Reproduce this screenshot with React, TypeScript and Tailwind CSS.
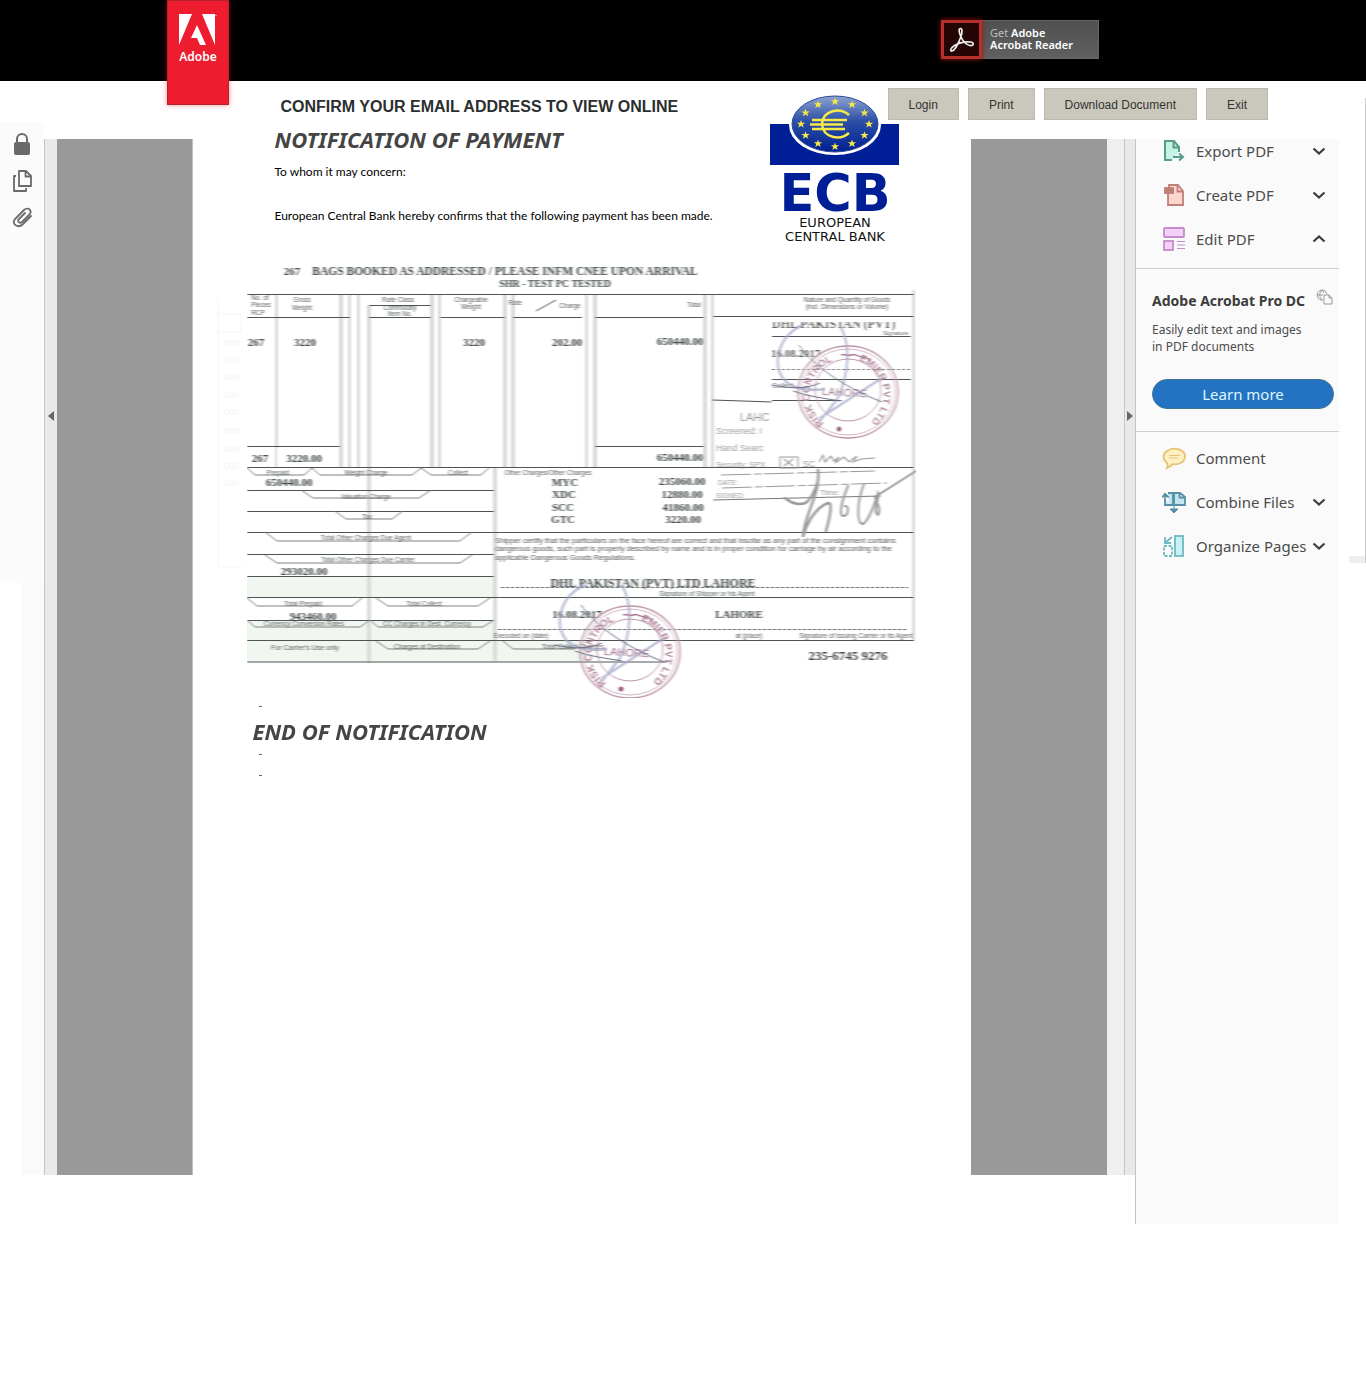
import React from "react";

const PDF_FONT = "font-['Noto_Sans','Liberation_Sans',sans-serif]";
const BODY_FONT = "font-['Lato','Noto_Sans',sans-serif]";

function AdobeTag() {
  return (
    <div className={`relative z-10 flex h-[105px] w-[62px] flex-col items-center border border-[#b5222c] bg-[#ed1c2e] pt-[13px] shadow-[0_0_5px_rgba(237,28,46,0.5)] ${PDF_FONT}`}>
      <svg viewBox="0 0 38 31" className="h-[31px] w-[38px]" fill="#fff" aria-hidden="true">
        <path d="M0 0h13L0 31zM23 0h13v31zM18 11l9 20h-6l-3-7h-6z" />
        <circle cx="37" cy="1.500" r="0.800" opacity="0.6" />
      </svg>
      <span className="mt-[2px] text-[12px] font-semibold leading-5 text-white">Adobe</span>
    </div>
  );
}

function ReaderBadge() {
  return (
    <div className={`flex h-[39px] w-[158px] border border-[#666] bg-linear-to-b from-[#505050] to-[#606060] ${PDF_FONT}`}>
      <div className="-my-px -ml-px flex w-[41px] items-center justify-center border-[3px] border-[#b3312a] bg-[#240404] shadow-[0_0_5px_#a01010]">
        <svg viewBox="0 0 26 26" className="size-[26px]" fill="none" stroke="#eee" strokeWidth="1.7" aria-hidden="true">
          <path d="M11.5 1.5c-2 0-1.700 4 .5 8.500 2 4 5.500 8 9 8.500 4 .6 4.500-3 .5-3.500-5-.6-12 1-16 3.500-4.500 3-4.500 6-2.500 5.500C6 23.500 10 15 11.800 10c1.600-4.500 1.700-8.500-.3-8.500z" />
        </svg>
      </div>
      <div className="pl-2 pt-[6px] text-[11px] font-semibold leading-3 text-white">
        <p><span className="font-normal text-[#bbb]">Get</span> Adobe</p>
        <p>Acrobat Reader</p>
      </div>
    </div>
  );
}

const stars = Array.from({ length: 12 }, (_, i) => {
  const a = (i * Math.PI) / 6;
  return [65 + Math.sin(a) * 34, 29 - Math.cos(a) * 22.5];
});

function EcbLogo() {
  return (
    <svg viewBox="0 0 134 150" className="h-[150px] w-[134px]" role="img" aria-label="European Central Bank">
      <defs>
        <linearGradient id="globe" x1="0" y1="0" x2="0" y2="1">
          <stop offset="0" stopColor="#8ea3d2" />
          <stop offset="0.45" stopColor="#2c4fa6" />
          <stop offset="1" stopColor="#001f92" />
        </linearGradient>
      </defs>
      <rect x="0" y="29" width="129" height="41" fill="#001f96" />
      <ellipse cx="65" cy="30" rx="46" ry="30" fill="#fff" />
      <ellipse cx="65" cy="29" rx="43" ry="28" fill="url(#globe)" stroke="#29489b" />
      {stars.map(([x, y], i) => (
        <path key={i} transform={`translate(${x} ${y})`} fill="#f7e948" d="M0-4l1 2.700h3.200l-2.500 1.800 1 3L0 1.800-2.700 3.500l1-3L-4.200-1.300H-1z" />
      ))}
      <path d="M79 20c-9-8-26-5-27 9 1 14 18 17 27 9M42 25h35M40 29.500h33M42 34h33" fill="none" stroke="#f7e948" strokeWidth="2.500" />
      <text x="65" y="116" textAnchor="middle" fontFamily="DejaVu Sans, sans-serif" fontSize="51" fontWeight="700" fill="#001f96">ECB</text>
      <g fill="#111" fontFamily="DejaVu Sans, sans-serif" fontSize="13" textAnchor="middle">
        <text x="65" y="132">EUROPEAN</text>
        <text x="65" y="146">CENTRAL BANK</text>
      </g>
    </svg>
  );
}

function StampScene() {
  return (
    <g fill="none">
      <g stroke="#bd94a8">
        <ellipse cx="848" cy="392" rx="50" ry="46" strokeWidth="1.500" />
        <ellipse cx="848" cy="392" rx="47" ry="43" strokeWidth="0.700" />
        <ellipse cx="848" cy="390" rx="33" ry="31" />
      </g>
      <path id="ring" d="M824 423A37 36 0 1 1 866 425" />
      <g fill="#b2849b" fontFamily="Liberation Sans, sans-serif" fontSize="10" fontWeight="700">
        <text><textPath href="#ring" startOffset="0">RISK CONTROL</textPath></text>
        <text><textPath href="#ring" startOffset="103">EMIER PVT LTD</textPath></text>
        <text x="822" y="396" transform="rotate(3 840 392)" fontSize="11" fontWeight="400" fill="#9a6686">LAHORE</text>
      </g>
      <path d="M841 355c4-2 6 2 10 0s7 2 12 2 4 2 8 4" stroke="#a97791" strokeWidth="1.500" />
      <circle cx="839" cy="429" r="2.500" fill="#a06080" />
      <g stroke="#a3a5c6" strokeWidth="2.500" opacity="0.7">
        <path d="M803 325C778 336 771 364 785 381c10 9 25 10 40 8M840 325c12 22 8 50-2 73l-18 23M820 418l62-40" />
      </g>
      <path d="M772 385c20 4 35 4 48-2M799 345c12 18 40 40 83 57M793 391c18 6 30 7 47 10" stroke="#666c85" />
    </g>
  );
}

const bars: number[][] = [
  [275, 295, 448, 3], [339, 295, 467, 4], [348, 295, 467, 3], [357, 295, 467, 3], [367, 305, 663, 4],
  [430, 295, 467, 4], [438, 295, 467, 3], [503, 295, 467, 4], [511, 295, 467, 4], [585, 295, 467, 3],
  [593, 295, 467, 4], [703, 295, 467, 4], [711, 295, 467, 3], [493, 467, 661, 4], [912, 290, 640, 3], [275, 448, 467, 2],
];

const smallLabels: [number, number, string][] = [
  [260, 300, "No. of"], [261, 307, "Pieces"], [258, 315, "RCP"], [302, 302, "Gross"], [302, 310, "Weight"],
  [398, 302, "Rate Class"], [400, 310, "Commodity"], [400, 316, "Item No."], [471, 302, "Chargeable"], [471, 309, "Weight"],
  [515, 305, "Rate"], [570, 308, "Charge"], [694, 307, "Total"], [847, 302, "Nature and Quantity of Goods"],
  [847, 309, "(incl. Dimensions or Volume)"], [278, 475, "Prepaid"], [366, 475, "Weight Charge"], [458, 475, "Collect"],
  [548, 475, "Other Charges/Other Charges"], [366, 499, "Valuation Charge"], [367, 519, "Tax"],
  [366, 540, "Total Other Charges Due Agent"], [368, 562, "Total Other Charges Due Carrier"], [303, 606, "Total Prepaid"],
  [424, 606, "Total Collect"], [304, 626, "Currency Conversion Rates"], [427, 626, "CC Charges in Dest. Currency"],
  [427, 649, "Charges at Destination"], [573, 649, "Total Collect Charges"], [521, 638, "Executed on (date)"],
  [749, 638, "at (place)"], [856, 638, "Signature of Issuing Carrier or its Agent"], [707, 596, "Signature of Shipper or his Agent"],
];

const boldValues: [number, number, string][] = [
  [256, 346, "267"], [305, 346, "3220"], [474, 346, "3220"], [567, 346, "202.00"], [680, 345, "650440.00"],
  [260, 462, "267"], [304, 462, "3220.00"], [680, 461, "650440.00"], [289, 486, "650440.00"], [304, 575, "293020.00"],
  [313, 620, "943460.00"], [565, 486, "MYC"], [564, 498, "XDC"], [563, 511, "SCC"], [563, 523, "GTC"],
  [682, 485, "235060.00"], [682, 498, "12880.00"], [683, 511, "41860.00"], [683, 523, "3220.00"],
  [577, 618, "16.08.2017"], [739, 618, "LAHORE"],
];

function Waybill() {
  return (
    <svg viewBox="217 260 720 445" className="ml-6 h-[445px] w-[720px]" role="img" aria-label="Scanned air waybill">
      <defs>
        <filter id="scan" x="0" y="0" width="1" height="1"><feGaussianBlur stdDeviation="0.9 0.4" /></filter>
        <clipPath id="stampClip"><rect x="772" y="322" width="139" height="117" /></clipPath>
        <clipPath id="stampClip2"><rect x="772" y="322" width="150" height="116" /></clipPath>
      </defs>
      <g fill="#f2f6f0">
        <rect x="247" y="577" width="248" height="21" />
        <rect x="247" y="621" width="248" height="41" />
        <rect x="495" y="641" width="90" height="21" />
      </g>
      <path d="M218 300v267h24M218 314h23v18h-23" fill="none" stroke="#f5f5f5" />
      <g fill="#f4f4f4" fontFamily="Liberation Sans, sans-serif" fontSize="9">
        {[346, 363, 380, 398, 415, 434, 452, 469, 486].map((y) => <text key={y} x="224" y={y}>000</text>)}
      </g>
      <g filter="url(#scan)">
        {bars.map(([x, y1, y2, w], i) => <rect key={i} x={x} y={y1} width={w} height={y2 - y1} fill="#dadbd8" />)}
        <g fill="none" stroke="#4c5453">
          <path d="M247 294.500H914M247 317.500H350M369 305.500H431M369 317.500H431M440 317.500H505M513 317.500H582M595 317.500H704M713 316.500H914" />
          <path d="M247 446.500H340M595 446.500H704M247 467.500H914M247 490.500H494M247 511.500H494M247 532.500H914M247 554.500H494M247 576.500H494M247 597.500H914M247 620.500H494M247 640.500H914M247 662H667" />
          <path d="M501 587.500H908M498 629.500H908" strokeDasharray="3 2" />
          <path d="M536 311l20-11M712 400l60 2" />
        </g>
        <path fill="none" stroke="#7c8280" d="M247 468l8 7h49l8-7 8 7h92l9-7 10 7h50l8-7M301 490l12 8h106l12-8M335 511l11 8h46l11-8M265 532l12 9h183l12-9M265 555l12 8h183l12-8M247 598l10 8h95l10-8M376 598l12 8h90l12-8M247 620l8 7h105l10-7 8 7h105l11-7M376 641l12 8h90l12-8M503 641l10 8h62" />
        <g fill="#555b5a" fontFamily="Liberation Sans, sans-serif" fontSize="6.500" textAnchor="middle">
          {smallLabels.map(([x, y, label]) => <text key={label + y} x={x} y={y}>{label}</text>)}
          <text x="305" y="650" fontSize="7">For Carrier's Use only</text>
        </g>
        <g fill="#3f4647" fontFamily="Liberation Serif, serif" fontSize="11" fontWeight="700" textAnchor="middle">
          {boldValues.map(([x, y, value]) => <text key={`${x}-${y}`} x={x} y={y}>{value}</text>)}
          <text x="292" y="275">267</text>
          <text x="505" y="275" fontSize="11.500">BAGS BOOKED AS ADDRESSED / PLEASE INFM CNEE UPON ARRIVAL</text>
          <text x="555" y="287" fontSize="10">SHR - TEST PC TESTED</text>
          <text x="653" y="587" fontSize="12">DHL PAKISTAN (PVT) LTD LAHORE</text>
          <text x="848" y="660" fontSize="13">235-6745 9276</text>
        </g>
        <g fill="#4f5657" fontFamily="Liberation Sans, sans-serif" fontSize="7.500">
          <text x="495" y="543">Shipper certify that the particulars on the face hereof are correct and that insofar as any part of the consignment contains</text>
          <text x="495" y="551">dangerous goods, such part is properly described by name and is in proper condition for carriage by air according to the</text>
          <text x="495" y="560">applicable Dangerous Goods Regulations.</text>
        </g>
        <g fill="#999" fontFamily="Liberation Sans, sans-serif" fontSize="9">
          <text x="740" y="421" fontSize="11">LAHC</text>
          <text x="716" y="434">Screened: I</text>
          <text x="716" y="451">Hand Searc</text>
          <text x="716" y="467" fontSize="8">Security: SPX</text>
          <text x="803" y="467">SC</text>
          <text x="718" y="485" fontSize="7">DATE:</text>
          <text x="716" y="498" fontSize="7">SIGNED:</text>
          <text x="820" y="495" fontSize="8">Time:</text>
        </g>
        <rect x="772" y="322" width="139" height="117" fill="#fff" />
        <g clipPath="url(#stampClip)">
          <text x="772" y="328" fontFamily="Liberation Serif, serif" fontSize="12" fontWeight="700" fill="#444">DHL PAKISTAN (PVT)</text>
          <text x="771" y="357" fontFamily="Liberation Serif, serif" fontSize="11" fontWeight="700" fill="#444">16.08.2017</text>
          <text x="772" y="388" fontFamily="Liberation Sans, sans-serif" fontSize="7" fill="#666">Collect</text>
          <text x="883" y="335" fontFamily="Liberation Sans, sans-serif" fontSize="6" fill="#666">Signature</text>
          <path d="M772 336.500H911M772 379.500H911M772 400.500H842" stroke="#4c5453" />
          <path d="M772 369.500H911" stroke="#4c5453" strokeDasharray="3 2" />
          <StampScene />
        </g>
        <g transform="translate(-218 260)" clipPath="url(#stampClip2)"><StampScene /></g>
        <g fill="none" stroke="#9a9a9a">
          <path d="M780 457h18v11h-18zM784 459l9 7M793 459l-9 7M819 462l4-7 2 7 6-6 3 5 5-4-4 6 9-6 5 5 8-6-4 6 8-3 14-1" strokeWidth="1.200" />
          <path d="M721 475l154-4M722 488l165-5" strokeDasharray="30 3 8 2" />
          <path d="M713 500l168-4" stroke="#777" />
        </g>
        <g fill="none" stroke="#999" strokeWidth="2.500" strokeLinecap="round">
          <path d="M785 498c7 6 17 8 22 4 7-8 13-20 11-31M818 470c3 24-14 44-15 67 4-16 14-30 25-34 6-1 0 21-2 28" />
          <path d="M848 486c-8 19-9 31-4 30 5-1 5-11 1-10M864 484c-8 20-7 40-1 40 6-3 13-24 15-31 2 6-6 18 0 22 4-7-2-12-3-18l41-26" strokeWidth="2" />
        </g>
      </g>
    </svg>
  );
}

function Chevron({ up = false }: { up?: boolean }) {
  return (
    <svg viewBox="0 0 14 10" className="h-[10px] w-[14px]" fill="none" stroke="#3c3c3c" strokeWidth="2.200" aria-hidden="true">
      <path d={up ? "M1.500 7.500L7 2.500l5.500 5" : "M1.500 2.500L7 7.500l5.500-5"} />
    </svg>
  );
}

const toolIcons: Record<string, React.ReactNode> = {
  "Export PDF": <g fill="#c4f2e4" stroke="#579b88" strokeWidth="2"><path d="M10 21H3V2h9l5 6v5" /><path d="M11.500 2v6.500H17M11 18h9M17 14.500l4 3.500-4 3.500" fill="none" /></g>,
  "Create PDF": <g fill="#fbd5ce" stroke="#bf7f76" strokeWidth="1.800"><path d="M6 9v13h15V8l-5-6H7v3" /><path d="M15.500 2v6.500H21M11 10.500v-5" fill="none" /><rect x="3" y="5" width="8" height="5" fill="#bf7f76" /></g>,
  "Edit PDF": <g fill="#f3d0f5" stroke="#c78acb" strokeWidth="1.800"><rect x="2" y="1" width="20" height="9" rx="1" /><rect x="2" y="14" width="9" height="9" /><path d="M15 14.500h8M15 18h8M15 21.500h8" strokeWidth="1" /></g>,
  Comment: <g fill="#fff0c4" stroke="#e6c374" strokeWidth="1.800"><path d="M5 22c1-2 1-3 0-5C1 14 0 8 5 5c7-5 18-1 18 5 0 7-8 9-12 8-2 2-4 3-6 4z" /><path d="M7 9.500h11M7 12h9" strokeWidth="1" /></g>,
  "Combine Files": <g fill="#c3e5ee" stroke="#568fa6" strokeWidth="1.800"><path d="M7 15H3V8M6 3h5v12H7M12 3h6l5 4v8H12zM17.500 3v4.500H23" /><path d="M0 7l3-4 4 4zM12 15v6M8 19l4 4 4-4z" fill="#568fa6" strokeWidth="1" /></g>,
  "Organize Pages": <g fill="#c9f0f3" stroke="#6fb9c3" strokeWidth="1.800"><rect x="13" y="2" width="8" height="20" /><rect x="2" y="12" width="8" height="10" fill="none" strokeDasharray="3 1.500" /><path d="M10 3L4 8M3 3v6h6" fill="none" /></g>,
};

function Tool({ label, state }: { label: string; state?: "open" | "closed" }) {
  return (
    <button type="button" className="flex h-11 w-full items-center pl-[26px] pr-[13px] text-left text-[15px] text-[#4c4c4c]">
      <svg viewBox="0 0 24 24" className="size-6 shrink-0" aria-hidden="true">{toolIcons[label]}</svg>
      <span className="ml-[10px] flex-1 whitespace-nowrap">{label}</span>
      {state && <Chevron up={state === "open"} />}
    </button>
  );
}

function Sidebar() {
  return (
    <aside className={`mt-[58px] h-[1085px] w-[204px] shrink-0 border-l border-[#c4c4c4] bg-[#fafafa] ${PDF_FONT}`}>
      <div className="-mt-[10px] border-b border-[#d0d0d0] pb-[7px]">
        <Tool label="Export PDF" state="closed" />
        <Tool label="Create PDF" state="closed" />
        <Tool label="Edit PDF" state="open" />
      </div>
      <section className="h-[163px] border-b border-[#d0d0d0] pl-4 pr-[5px] pt-5 text-[#4c4c4c]">
        <div className="flex items-start justify-between">
          <h2 className="whitespace-nowrap text-[14px] font-bold leading-6 text-[#3c3c3c]">Adobe Acrobat Pro DC</h2>
          <svg viewBox="0 0 18 16" className="h-4 w-[18px]" fill="none" stroke="#999" aria-hidden="true">
            <path d="M7 11A5 5 0 1 1 11 5M1 6h6M6 1c-3 3-3 7 0 10M6 1l2 3M8 6h5l3 3v6H8zM13 6v3h3" />
          </svg>
        </div>
        <p className="mt-2 whitespace-nowrap text-[12px] leading-[17px]">Easily edit text and images<br />in PDF documents</p>
        <button type="button" className="mt-6 h-[30px] w-full rounded-full border border-[#3d7590] bg-[#2373c2] text-[15px] leading-7 text-[#dff6ff]">Learn more</button>
      </section>
      <div className="pt-1">
        <Tool label="Comment" />
        <Tool label="Combine Files" state="closed" />
        <Tool label="Organize Pages" state="closed" />
      </div>
    </aside>
  );
}

function Rail() {
  return (
    <nav aria-label="Document panels" className="mt-[41px] w-11 shrink-0">
      <div className="flex h-[461px] flex-col items-center gap-3 bg-[#fbfbfb] pt-[11px] text-[#6a6a6a]">
        <button type="button" aria-label="Security">
          <svg viewBox="0 0 20 24" className="h-6 w-5"><path d="M5 11V6a5 5 0 0 1 10 0v5" fill="none" stroke="currentColor" strokeWidth="2" /><rect x="2" y="9" width="16" height="13" rx="2" fill="currentColor" /></svg>
        </button>
        <button type="button" aria-label="Pages">
          <svg viewBox="0 0 22 24" className="h-6 w-[22px]" fill="none" stroke="currentColor" strokeWidth="1.800" strokeLinejoin="round"><path d="M8 2h7l5 5v10H8zM14.500 2v5.500H20M5 7H3v15h12v-3" /></svg>
        </button>
        <button type="button" aria-label="Attachments">
          <svg viewBox="0 0 22 24" className="h-6 w-[22px]" fill="none" stroke="currentColor" strokeWidth="1.800" strokeLinecap="round"><path d="M20 11l-8 8c-5 5-12 0-8-5l9-9c4-4 9 1 5 5l-7 7c-3 2-5-1-3-3l6-6" /></svg>
        </button>
      </div>
      <div className="ml-[21px] h-[592px] bg-[#fafafa]" />
    </nav>
  );
}

export default function App() {
  return (
    <div className="min-h-[1384px] bg-white">
      <header className="flex h-[81px] items-start justify-between bg-black pl-[167px] pr-[267px]">
        <AdobeTag />
        <div className="pt-5"><ReaderBadge /></div>
      </header>
      <div className="relative">
        <div className="absolute right-[98px] top-[7px] z-10 flex gap-[9px] font-['Liberation_Sans',sans-serif] text-[12px] text-[#333]">
          {["Login", "Print", "Download Document", "Exit"].map((label) => (
            <button key={label} type="button" className="h-8 border border-[#bcbab0] bg-[#cac8bd] px-5 pt-[2px]">{label}</button>
          ))}
        </div>
        <main className="flex items-start">
          <Rail />
          <div className="mt-[58px] flex h-[1036px] w-[13px] shrink-0 items-start border-l border-[#c4c4c4] bg-[#e9e9e9] pt-[271px]">
            <svg viewBox="0 0 12 12" className="size-3" aria-hidden="true"><path d="M9 1v10L3 6z" fill="#666" /></svg>
          </div>
          <div className="mt-[58px] h-[1036px] flex-[135_1_0%] border-r border-[#c0c0c0] bg-[#999]" />
          <article className="w-[778px] shrink-0">
            <div className="flex h-[174px] justify-between pl-[82px] pr-[67px]">
              <div className="whitespace-nowrap">
                <h1 className="pl-[6px] pt-4 font-['Liberation_Sans',sans-serif] text-[16px] font-bold leading-5 text-[#2b2f2f]">CONFIRM YOUR EMAIL ADDRESS TO VIEW ONLINE</h1>
                <h2 className={`mt-[6px] text-[22px] font-bold italic leading-8 text-[#454545] ${PDF_FONT}`}>NOTIFICATION OF PAYMENT</h2>
                <div className={`text-[12px] leading-5 text-black ${BODY_FONT}`}>
                  <p className="mt-[7px]">To whom it may concern:</p>
                  <p className="mt-6">European Central Bank hereby confirms that the following payment has been made.</p>
                </div>
              </div>
              <div className="pt-[14px]"><EcbLogo /></div>
            </div>
            <div className="mt-[5px]"><Waybill /></div>
            <div className="pl-[60px]">
              <div className="ml-[6px] mt-[1px] h-px w-[3px] bg-[#666]" />
              <h2 className={`mt-2 text-[22px] font-bold italic leading-8 text-[#454545] ${PDF_FONT}`}>END OF NOTIFICATION</h2>
              <div className="ml-[6px] mt-[7px] h-px w-[3px] bg-[#666]" />
              <div className="ml-[6px] mt-5 h-px w-[3px] bg-[#666]" />
            </div>
          </article>
          <div className="mt-[58px] h-[1036px] flex-[137_1_0%] bg-[#999]" />
          <div className="mt-[58px] h-[1036px] w-[17px] shrink-0 bg-[#efefef]" />
          <div className="mt-[58px] flex h-[1036px] w-[11px] shrink-0 items-start border-l border-[#c4c4c4] bg-[#e8e8e8] pt-[271px]">
            <svg viewBox="0 0 10 12" className="h-3 w-[10px]" aria-hidden="true"><path d="M2 1v10l6-5z" fill="#666" /></svg>
          </div>
          <Sidebar />
          <div className="mt-[17px] flex h-[465px] w-[27px] shrink-0 items-end justify-end border-r border-[#ccc]">
            <div className="h-[7px] w-4 bg-[#eee]" />
          </div>
        </main>
      </div>
    </div>
  );
}
